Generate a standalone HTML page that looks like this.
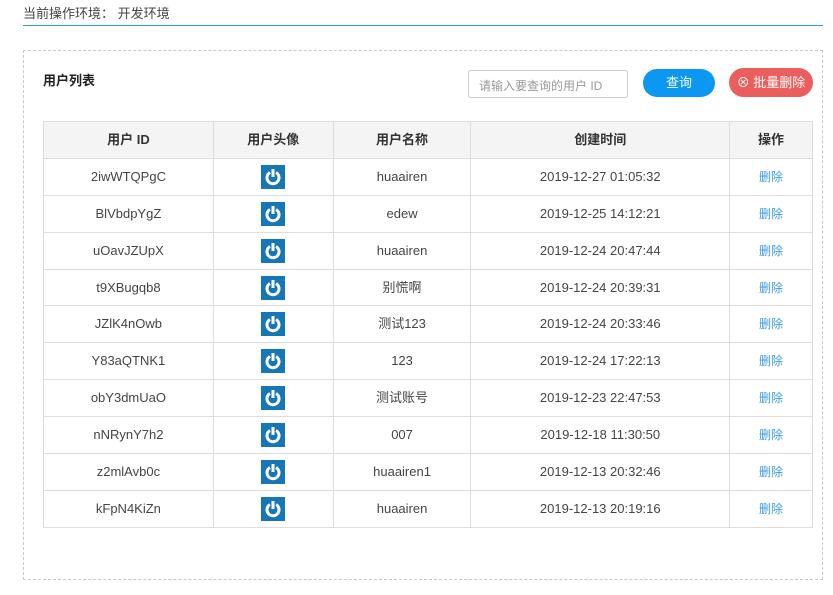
<!DOCTYPE html>
<html><head><meta charset="utf-8"><style>
*{margin:0;padding:0;box-sizing:border-box}
body{width:833px;height:595px;background:#fff;font-family:"Liberation Sans","Noto Sans CJK SC",sans-serif;color:#444;position:relative;overflow:hidden}
.top{position:absolute;left:23px;top:3px;font-size:13px;color:#444}
.line{position:absolute;left:23px;top:25px;width:800px;height:1px;background:#2aa0d8}
.box{position:absolute;left:23px;top:50px;width:800px;height:530px;border:1px dashed #c8c8c8}
.title{position:absolute;left:43px;top:70px;font-size:13px;font-weight:bold;color:#222}
.inp{position:absolute;left:468px;top:70px;width:160px;height:28px;border:1px solid #ccc;border-radius:3px;font-size:12px;color:#999;padding:6px 10px}
.q{position:absolute;left:643px;top:69px;width:72px;height:28px;border-radius:14px;background:#0c98f0;color:#fff;font-size:13px;text-align:center;line-height:28px}
.d{position:absolute;left:729px;top:68px;width:84px;height:29px;border-radius:15px;background:#ea5f5c;color:#fff;font-size:13px;text-align:center;line-height:29px}
table{position:absolute;left:43px;top:121px;width:770px;border-collapse:collapse;font-size:13px}
td,th{border:1px solid #ddd;height:36.9px;text-align:center;padding:0;line-height:16px}
th{background:#f4f4f4;font-weight:bold;color:#333}
.ic{display:inline-block;width:24px;height:24px;background:#1676b8;vertical-align:middle}
a{color:#3c9be0;text-decoration:none;font-size:12px}
</style></head><body>
<div class="top">当前操作环境： 开发环境</div>
<div class="line"></div>
<div class="box"></div>
<div class="title">用户列表</div>
<div class="inp">请输入要查询的用户 ID</div>
<div class="q">查询</div>
<div class="d">⊗ 批量删除</div>
<table>
<colgroup><col style="width:170px"><col style="width:120px"><col style="width:138px"><col style="width:259px"><col style="width:83px"></colgroup>
<tr><th>用户 ID</th><th>用户头像</th><th>用户名称</th><th>创建时间</th><th>操作</th></tr>
<tr><td>2iwWTQPgC</td><td><span class="ic"><svg width="24" height="24"><path d="M9 7.5A6 6 0 1 0 15 7.5" fill="none" stroke="#fff" stroke-width="3"/><rect x="10.5" y="4" width="3" height="8" fill="#fff"/></svg></span></td><td>huaairen</td><td>2019-12-27 01:05:32</td><td><a>删除</a></td></tr>
<tr><td>BlVbdpYgZ</td><td><span class="ic"><svg width="24" height="24"><path d="M9 7.5A6 6 0 1 0 15 7.5" fill="none" stroke="#fff" stroke-width="3"/><rect x="10.5" y="4" width="3" height="8" fill="#fff"/></svg></span></td><td>edew</td><td>2019-12-25 14:12:21</td><td><a>删除</a></td></tr>
<tr><td>uOavJZUpX</td><td><span class="ic"><svg width="24" height="24"><path d="M9 7.5A6 6 0 1 0 15 7.5" fill="none" stroke="#fff" stroke-width="3"/><rect x="10.5" y="4" width="3" height="8" fill="#fff"/></svg></span></td><td>huaairen</td><td>2019-12-24 20:47:44</td><td><a>删除</a></td></tr>
<tr><td>t9XBugqb8</td><td><span class="ic"><svg width="24" height="24"><path d="M9 7.5A6 6 0 1 0 15 7.5" fill="none" stroke="#fff" stroke-width="3"/><rect x="10.5" y="4" width="3" height="8" fill="#fff"/></svg></span></td><td>别慌啊</td><td>2019-12-24 20:39:31</td><td><a>删除</a></td></tr>
<tr><td>JZlK4nOwb</td><td><span class="ic"><svg width="24" height="24"><path d="M9 7.5A6 6 0 1 0 15 7.5" fill="none" stroke="#fff" stroke-width="3"/><rect x="10.5" y="4" width="3" height="8" fill="#fff"/></svg></span></td><td>测试123</td><td>2019-12-24 20:33:46</td><td><a>删除</a></td></tr>
<tr><td>Y83aQTNK1</td><td><span class="ic"><svg width="24" height="24"><path d="M9 7.5A6 6 0 1 0 15 7.5" fill="none" stroke="#fff" stroke-width="3"/><rect x="10.5" y="4" width="3" height="8" fill="#fff"/></svg></span></td><td>123</td><td>2019-12-24 17:22:13</td><td><a>删除</a></td></tr>
<tr><td>obY3dmUaO</td><td><span class="ic"><svg width="24" height="24"><path d="M9 7.5A6 6 0 1 0 15 7.5" fill="none" stroke="#fff" stroke-width="3"/><rect x="10.5" y="4" width="3" height="8" fill="#fff"/></svg></span></td><td>测试账号</td><td>2019-12-23 22:47:53</td><td><a>删除</a></td></tr>
<tr><td>nNRynY7h2</td><td><span class="ic"><svg width="24" height="24"><path d="M9 7.5A6 6 0 1 0 15 7.5" fill="none" stroke="#fff" stroke-width="3"/><rect x="10.5" y="4" width="3" height="8" fill="#fff"/></svg></span></td><td>007</td><td>2019-12-18 11:30:50</td><td><a>删除</a></td></tr>
<tr><td>z2mlAvb0c</td><td><span class="ic"><svg width="24" height="24"><path d="M9 7.5A6 6 0 1 0 15 7.5" fill="none" stroke="#fff" stroke-width="3"/><rect x="10.5" y="4" width="3" height="8" fill="#fff"/></svg></span></td><td>huaairen1</td><td>2019-12-13 20:32:46</td><td><a>删除</a></td></tr>
<tr><td>kFpN4KiZn</td><td><span class="ic"><svg width="24" height="24"><path d="M9 7.5A6 6 0 1 0 15 7.5" fill="none" stroke="#fff" stroke-width="3"/><rect x="10.5" y="4" width="3" height="8" fill="#fff"/></svg></span></td><td>huaairen</td><td>2019-12-13 20:19:16</td><td><a>删除</a></td></tr>
</table>
</body></html>
